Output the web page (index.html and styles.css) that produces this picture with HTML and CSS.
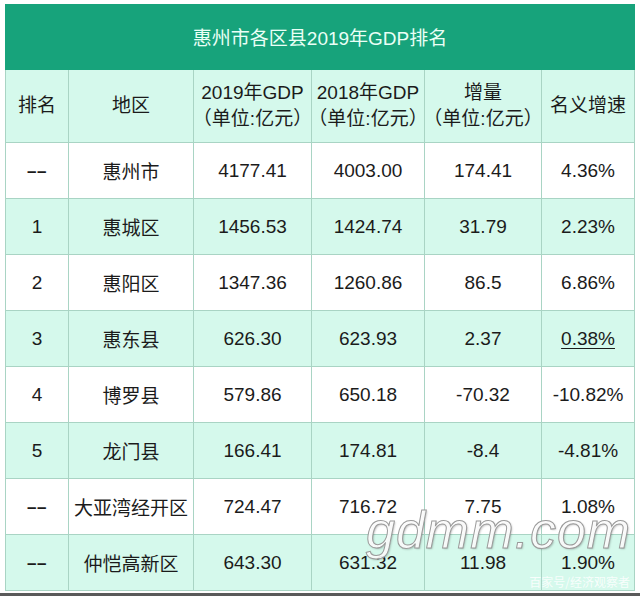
FILE: index.html
```html
<!DOCTYPE html>
<html lang="zh">
<head>
<meta charset="utf-8">
<link rel="stylesheet" href="styles.css">
</head>
<body>
<div class="page">
  <table class="gdp">
    <colgroup>
      <col class="c1"><col class="c2"><col class="c3"><col class="c4"><col class="c5"><col class="c6">
    </colgroup>
    <thead>
      <tr class="title"><th colspan="6">惠州市各区县2019年GDP排名</th></tr>
      <tr class="head">
        <th>排名</th>
        <th>地区</th>
        <th>2019年GDP<br><span class="p">（</span>单位:亿元<span class="p">）</span></th>
        <th>2018年GDP<br><span class="p">（</span>单位:亿元<span class="p">）</span></th>
        <th>增量<br><span class="p">（</span>单位:亿元<span class="p">）</span></th>
        <th>名义增速</th>
      </tr>
    </thead>
    <tbody>
      <tr><td><span class="dash">––</span></td><td>惠州市</td><td>4177.41</td><td>4003.00</td><td>174.41</td><td>4.36%</td></tr>
      <tr class="alt"><td>1</td><td>惠城区</td><td>1456.53</td><td>1424.74</td><td>31.79</td><td>2.23%</td></tr>
      <tr><td>2</td><td>惠阳区</td><td>1347.36</td><td>1260.86</td><td>86.5</td><td>6.86%</td></tr>
      <tr class="alt"><td>3</td><td>惠东县</td><td>626.30</td><td>623.93</td><td>2.37</td><td><span class="u">0.38%</span></td></tr>
      <tr><td>4</td><td>博罗县</td><td>579.86</td><td>650.18</td><td>-70.32</td><td>-10.82%</td></tr>
      <tr class="alt"><td>5</td><td>龙门县</td><td>166.41</td><td>174.81</td><td>-8.4</td><td>-4.81%</td></tr>
      <tr><td><span class="dash">––</span></td><td>大亚湾经开区</td><td>724.47</td><td>716.72</td><td>7.75</td><td>1.08%</td></tr>
      <tr class="alt"><td><span class="dash">––</span></td><td>仲恺高新区</td><td>643.30</td><td>631.32</td><td>11.98</td><td>1.90%</td></tr>
    </tbody>
  </table>
  <div class="wm">gdmm.com</div>
  <div class="wm-small">百家号/经济观察者</div>
  <div class="edge"></div>
</div>
</body>
</html>
```

FILE: styles.css
```css
html, body {
  margin: 0;
  padding: 0;
  background: #ffffff;
}
.page {
  position: relative;
  width: 640px;
  height: 596px;
  overflow: hidden;
  padding: 4px 0 0 5px;
  box-sizing: border-box;
  font-family: "Liberation Sans", "Noto Sans CJK SC", sans-serif;
  color: #1b1b1b;
}
.gdp {
  border-collapse: collapse;
  table-layout: fixed;
  width: 629px;
}
.c1 { width: 63px; }
.c2 { width: 125px; }
.c3 { width: 118px; }
.c4 { width: 113px; }
.c5 { width: 117px; }
.c6 { width: 93px; }
.gdp th, .gdp td {
  border: 1px solid #a9d4c4;
  text-align: center;
  vertical-align: middle;
  padding: 0;
  font-weight: normal;
  font-size: 19px;
}
.title th {
  height: 62px;
  background: #17a37b;
  color: #eafff6;
  font-size: 19px;
  border-color: #17a37b;
  padding-bottom: 2px;
}
.head th {
  height: 72px;
  background: #d5f9ec;
  line-height: 24px;
}
.p {
  font-family: "Noto Sans CJK SC", sans-serif;
  font-feature-settings: "halt" 1;
}
.dash {
  font-family: "Liberation Sans", sans-serif;
  font-weight: bold;
  font-size: 17px;
  letter-spacing: 0.5px;
}
.gdp td {
  height: 55px;
  background: #ffffff;
}
.gdp tr.alt td {
  background: #d5f9ec;
}
.u {
  text-decoration: underline;
  text-underline-offset: 3px;
  text-decoration-thickness: 1px;
}
.wm {
  position: absolute;
  left: 366px;
  top: 500px;
  font-family: "Liberation Sans", sans-serif;
  font-style: italic;
  font-size: 52px;
  letter-spacing: 1px;
  color: rgba(255, 255, 255, 0.9);
  -webkit-text-stroke: 1px #9a9a9a;
  text-shadow: 1px 1px 2px rgba(0, 0, 0, 0.25);
}
.wm-small {
  position: absolute;
  right: 10px;
  bottom: 6px;
  font-family: "Noto Sans CJK SC", sans-serif;
  font-size: 12px;
  color: rgba(255, 255, 255, 0.85);
}
.edge {
  position: absolute;
  left: 0;
  right: 0;
  bottom: 0;
  height: 3px;
  background: #5a5a5a;
}
```
